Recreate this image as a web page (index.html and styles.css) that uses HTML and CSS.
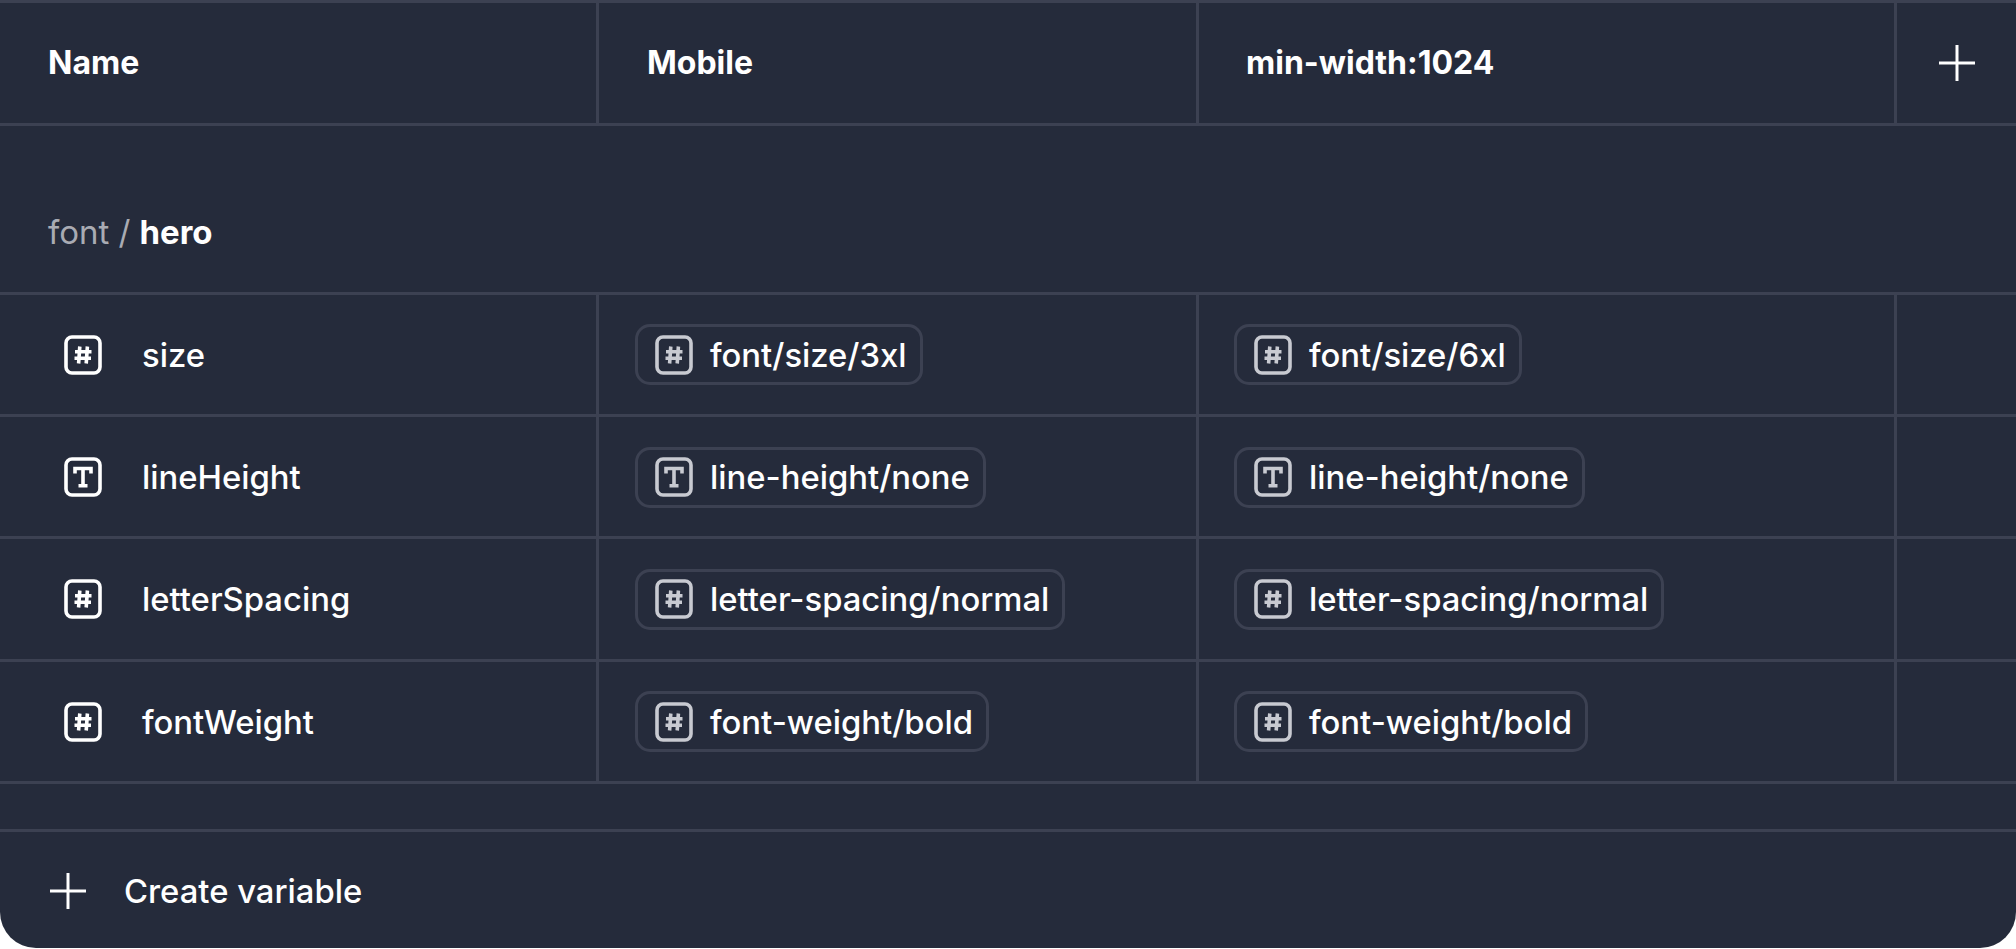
FILE: index.html
```html
<!DOCTYPE html>
<html lang="en">
<head>
  <meta charset="UTF-8">
  <title>Variables</title>
  <link rel="stylesheet" href="styles.css">
</head>
<body>

  <!-- Icons used by the rows and chips -->
  <svg class="sprite" width="0" height="0">
    <symbol id="icon-number" viewBox="0 0 38 40">
      <rect x="2" y="2" width="34" height="36" rx="6" fill="none" stroke="currentColor" stroke-width="3.6"/>
      <path d="M15.8 11.5 14.6 28.5M23.4 11.5 22.2 28.5M11 16.8H27.5M10.5 23.2H27" fill="none" stroke="currentColor" stroke-width="3.6"/>
    </symbol>
    <symbol id="icon-text" viewBox="0 0 38 40">
      <rect x="2" y="2" width="34" height="36" rx="6" fill="none" stroke="currentColor" stroke-width="3.6"/>
      <path d="M11 16.5V11.5H27V16.5M19 11.5V28.5M14.5 28.8H23.5" fill="none" stroke="currentColor" stroke-width="3.6"/>
    </symbol>
    <symbol id="icon-plus" viewBox="0 0 36 36">
      <path d="M18 0V36M0 18H36" fill="none" stroke="currentColor" stroke-width="3"/>
    </symbol>
  </svg>

  <div class="panel">

    <!-- Header row -->
    <div class="row row-head">
      <div class="cell cell-name">Name</div>
      <div class="cell cell-mode">Mobile</div>
      <div class="cell cell-mode">min-width:1024</div>
      <div class="cell cell-add"><svg class="icon-plus"><use href="#icon-plus"/></svg></div>
    </div>

    <!-- Group title -->
    <div class="group-title"><span class="group-path">font /</span> <strong>hero</strong></div>

    <!-- Variables -->
    <div class="row">
      <div class="cell cell-var"><svg class="icon-type"><use href="#icon-number"/></svg>size</div>
      <div class="cell"><span class="chip"><svg class="icon-type"><use href="#icon-number"/></svg>font/size/3xl</span></div>
      <div class="cell"><span class="chip"><svg class="icon-type"><use href="#icon-number"/></svg>font/size/6xl</span></div>
      <div class="cell"></div>
    </div>

    <div class="row">
      <div class="cell cell-var"><svg class="icon-type"><use href="#icon-text"/></svg>lineHeight</div>
      <div class="cell"><span class="chip"><svg class="icon-type"><use href="#icon-text"/></svg>line-height/none</span></div>
      <div class="cell"><span class="chip"><svg class="icon-type"><use href="#icon-text"/></svg>line-height/none</span></div>
      <div class="cell"></div>
    </div>

    <div class="row">
      <div class="cell cell-var"><svg class="icon-type"><use href="#icon-number"/></svg>letterSpacing</div>
      <div class="cell"><span class="chip"><svg class="icon-type"><use href="#icon-number"/></svg>letter-spacing/normal</span></div>
      <div class="cell"><span class="chip"><svg class="icon-type"><use href="#icon-number"/></svg>letter-spacing/normal</span></div>
      <div class="cell"></div>
    </div>

    <div class="row">
      <div class="cell cell-var"><svg class="icon-type"><use href="#icon-number"/></svg>fontWeight</div>
      <div class="cell"><span class="chip"><svg class="icon-type"><use href="#icon-number"/></svg>font-weight/bold</span></div>
      <div class="cell"><span class="chip"><svg class="icon-type"><use href="#icon-number"/></svg>font-weight/bold</span></div>
      <div class="cell"></div>
    </div>

    <div class="spacer"></div>

    <!-- Footer action -->
    <div class="create"><svg class="icon-plus"><use href="#icon-plus"/></svg>Create variable</div>
  </div>

</body>
</html>
```

FILE: styles.css
```css
/* Base styles for body */
body {
  margin: 0;
  background-color: #fff;
  font-family: 'Inter', 'Liberation Sans', sans-serif;
  color: #fff;
}

.sprite {
  position: absolute;
}

/* Dark card */
.panel {
  height: 948px;
  box-sizing: border-box;
  background-color: #252b3b;
  border-top: 3px solid #3c4152;
  border-radius: 0 0 36px 36px;
  overflow: hidden;
}

/* Table rows */
.row {
  display: grid;
  grid-template-columns: 599px 600px 698px 1fr;
  height: 122.4px;
  box-sizing: border-box;
  border-bottom: 3px solid #3c4152;
}

.row-head {
  height: 122.5px;
}

.cell {
  display: flex;
  align-items: center;
  box-sizing: border-box;
  padding-top: 1px;
  padding-left: 36px;
  border-right: 3px solid #3c4152;
  font-size: 32.8px;
  font-weight: 500;
}

.cell:nth-child(3) {
  padding-left: 35px;
}

.cell:last-child {
  border-right: none;
  padding-left: 0;
}

.row-head .cell {
  padding-top: 0;
  font-size: 32px;
  font-weight: 700;
  padding-left: 48px;
}

.row-head .cell:nth-child(3) {
  padding-left: 47px;
}

.row-head .cell-add {
  padding-left: 0;
  justify-content: center;
}

.cell-var {
  padding-left: 64px;
  gap: 40px;
}

/* Group heading */
.group-title {
  display: flex;
  align-items: center;
  gap: 9px;
  height: 169px;
  box-sizing: border-box;
  padding: 46px 48px 0;
  border-bottom: 3px solid #3c4152;
  font-size: 33px;
}

.group-title strong {
  font-weight: 700;
}

.group-path {
  color: #a9abb3;
}

/* Variable reference chip */
.chip {
  display: inline-flex;
  align-items: center;
  gap: 17px;
  height: 61px;
  box-sizing: border-box;
  padding: 0 13px 0 17px;
  border: 3px solid #3c4152;
  border-radius: 15px;
}

.chip .icon-type {
  color: #c8cad1;
}

.icon-type {
  width: 38px;
  height: 40px;
  flex: none;
}

.icon-plus {
  width: 36px;
  height: 36px;
  flex: none;
}

.spacer {
  height: 47.5px;
  box-sizing: border-box;
  border-bottom: 3px solid #3c4152;
}

/* Create variable action */
.create {
  display: flex;
  align-items: center;
  gap: 38px;
  height: 118px;
  padding-left: 50px;
  font-size: 32.8px;
  font-weight: 500;
}
```
